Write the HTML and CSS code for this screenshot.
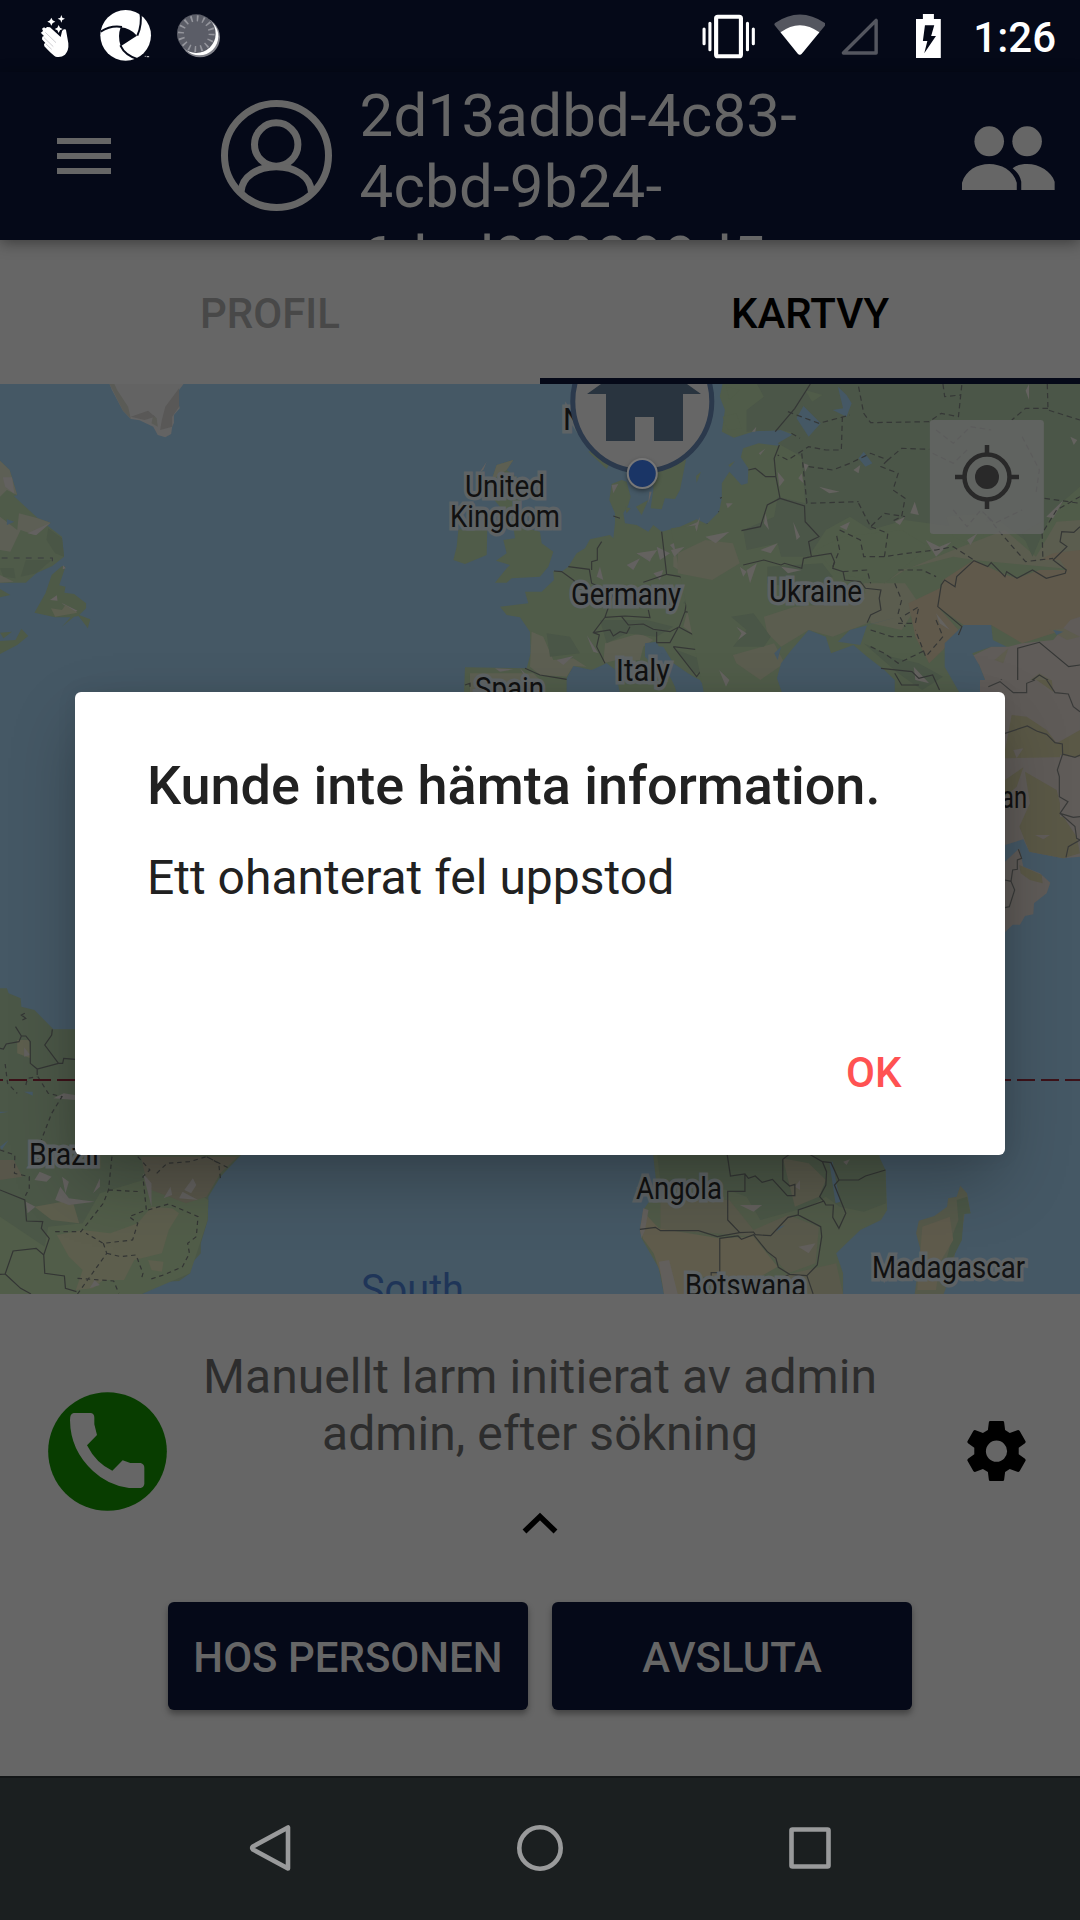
FILE: index.html
```html
<!DOCTYPE html>
<html lang="sv">
<head>
<meta charset="utf-8">
<title>Kartvy</title>
<link rel="stylesheet" href="styles.css">
</head>
<body>
<div class="screen">
  <div class="statusbar">
    <div class="status-left">
      <svg class="s-hand" viewBox="60 0 90 180"><path fill="#fff" d="M62 84l7-6-3-7 6-4 5 3 4-4 9 1 32 29 4-17q3-8 10-6l2 2 7 40q2 22-10 34-12 10-28 6-8-3-34-31l-1-7 4-3-10-11 1-8 5-2-9-9zM94 38l4 8 8 4-8 4-4 8-4-8-8-4 8-4zM124 30l3 8 8 3-8 4-3 8-3-8-8-4 8-3zM116 60l4 8 8 4-8 4-4 8-4-8-8-4 8-4z"/><path d="M76 82l32 31M72 98l28 27M77 116l18 17" stroke="#9a9ba2" stroke-width="1.5" fill="none"/></svg>
      <svg class="s-logo" viewBox="240 0 155 180"><circle cx="317" cy="91" r="76" fill="#fff"/><path fill="#050918" d="M302 67Q330 69 351 92Q332 104 302 124Q292 94 302 67z"/><path d="M242 80Q273 60 306 66M352 92Q367 60 361 20M301 121Q315 152 357 164" stroke="#050918" stroke-width="6" fill="none"/><path d="M374 154h5m3 3v-4l2 3 2-3v4" stroke="#ddd" stroke-width="2" fill="none"/></svg>
      <svg class="s-spin" viewBox="470 0 130 180"><circle cx="539" cy="97" r="60" fill="#81828a"/><circle cx="537" cy="94" r="57" fill="#fff"/><circle cx="528" cy="86" r="58" fill="#5b5d67"/><circle cx="528" cy="86" r="46" fill="none" stroke="#94959c" stroke-width="18" stroke-dasharray="5 13.06"/></svg>
    </div>
    <div class="status-right">
      <svg class="s-vib" viewBox="470 0 155 216" preserveAspectRatio="none"><rect x="511" y="50" width="72" height="119" rx="5" fill="none" stroke="#fff" stroke-width="12"/><path d="M493 70v79M602 70v79M476 87v44M619 87v44" stroke="#fff" stroke-width="9" stroke-linecap="round"/></svg>
      <svg class="s-wifi" viewBox="678 0 150 216" preserveAspectRatio="none"><path fill="#54565f" d="M681 69Q753 18 826 69Q830 73 826 77L758 162Q753 167 748 162L681 77Q677 73 681 69z"/><path fill="#fff" d="M697 97Q753 54 810 97L758 162Q753 167 748 162z"/></svg>
      <svg class="s-sig" viewBox="873 0 110 216" preserveAspectRatio="none"><path d="M975 61V159H880z" fill="none" stroke="#54565f" stroke-width="10" stroke-linejoin="round"/></svg>
      <svg class="s-bat" viewBox="1092 0 72 216" preserveAspectRatio="none"><path fill="#fff" d="M1112 42h32v15h20v117h-72V57h20z"/><path fill="#050918" d="M1118 76h27l-9 32h14l-34 52 9-37h-13z"/></svg>
      <span class="clock">1:26</span>
    </div>
  </div>

  <header class="appbar">
    <div class="menu"><i></i><i></i><i></i></div>
    <svg class="avatar" viewBox="0 0 111 111" fill="none" stroke="#666" stroke-width="7"><circle cx="55.5" cy="55.5" r="52"/><circle cx="55.2" cy="44.5" r="21.7"/><path d="M20 92C21 76 37 66.8 55.3 66.8S89.500 76 90.500 92"/></svg>
    <div class="title">2d13adbd-4c83-4cbd-9b24-6dad999999d5</div>
    <svg class="people" viewBox="1225 378 270 192" preserveAspectRatio="none" fill="#666"><ellipse cx="1304" cy="424" rx="43" ry="45"/><ellipse cx="1414" cy="424" rx="43" ry="45"/><path d="M1225 570V548C1236 510 1270 492 1304 492S1374 510 1384 548V570zM1372 505C1385 494 1400 492 1414 492C1450 492 1485 515 1494 545V570H1397V545C1393 525 1385 517 1372 505z"/></svg>
  </header>

  <nav class="tabs"><div class="tab">PROFIL</div><div class="tab active">KARTVY</div></nav>

  <svg class="map" viewBox="0 384 1080 910">
    <rect y="384" width="1080" height="910" fill="#455865"/>

    <!-- North Atlantic: Greenland, Labrador, Newfoundland -->
    <g transform="translate(0 240) scale(.3444 .3333)">
      <path fill="#636363" d="M318 432L325 450 357 512 380 537 405 541 445 560 458 585 480 592 497 582 500 560 505 548 505 525 522 505 518 490 520 450 533 432z"/>
      <path fill="#5a5b56" d="M318 432L357 512 380 537 372 500 340 450 332 432zM445 525L440 550 458 560 455 535z"/>
      <path fill="#595857" d="M480 500L520 445 520 500 500 530 500 560 465 570 470 540zM380 530L430 512 450 530 420 540z"/>
      <path fill="#4f5b49" d="M0 662L28 690 50 765 40 768 110 835 147 848 138 857 180 890 186 950 152 978 105 1000 75 1028 0 1028z"/>
      <path fill="#5d5f55" d="M0 662L28 690 50 765 20 750 0 770zM0 830L50 870 55 820 110 835 147 848 100 885 60 870 30 935 0 930zM0 1005L40 1025 0 1028z"/>
      <path fill="#636160" d="M8 712L35 712 42 762 15 740zM80 880L147 848 105 886z"/>
      <path fill="#4a5646" d="M140 865L180 895 186 950 160 940 135 900zM75 960L150 960 105 1000 60 1010zM0 985L40 985 45 1015 10 1010z"/>
      <path fill="#455865" d="M20 838L42 845 20 855z"/>
      <path d="M5 954H152V978" stroke="#3b3d40" stroke-width="3" stroke-dasharray="17 18" fill="none"/>
      <path fill="#4e5a47" d="M180 978L190 980 172 1036 190 1040 187 1058 215 1062 250 1090 250 1105 230 1125 262 1138 255 1165 228 1128 215 1130 180 1160 205 1132 160 1132 100 1118 132 1060 150 1005zM0 1203L45 1200 62 1166 82 1188 50 1215 0 1242zM0 1047L30 1065 0 1072zM0 1178L35 1175 10 1195z"/>
      <path fill="#666261" d="M145 1080L165 1066 167 1082zM178 1088L225 1112 215 1118zM183 976L191 985 182 988z"/>
      <path fill="#5d5f50" d="M148 1105L180 1110 190 1095 225 1118 160 1130z"/>
    </g>

    <!-- Western Europe -->
    <g transform="translate(440 380) scale(.3333)">
      <g fill="#505c49">
        <path d="M515 312L545 300 560 305 572 350 565 375 550 400 555 430 590 435 625 455 640 435 665 455 720 440 770 418 800 432 885 432 900 940 840 940 810 925 700 850 670 800 615 795 620 820 700 900 710 940 540 940 527 880 500 850 455 870 400 858 380 895 380 940H72L75 862 260 865 272 820 270 755 240 712 200 705 180 680 265 670 255 635 305 635 342 600 340 573 365 575 385 560 410 520 435 505 450 478 510 465 520 475 525 430 525 400 508 360z"/>
        <path d="M155 350L175 300 160 285 170 255 220 240 200 270 240 300 245 440 300 455 305 490 340 515 325 560 300 590 215 595 200 608 165 608 200 565 210 555 168 542 200 520 190 480 225 475 220 440 180 380zM55 450L50 500 40 540 75 552 140 525 142 445 100 430zM445 215L500 267 515 240 480 200zM700 200L738 240 720 330 705 357 675 355 665 388 632 385 640 330 640 260zM588 380L625 360 605 405zM555 380L572 385 560 400zM768 288L783 275 770 308zM865 255L885 243 870 262z"/>
      </g>
      <path fill="#5d5f52" d="M170 255L220 240 200 270 155 300zM700 530L780 480 850 490 870 540 930 560 870 590 820 610 750 590 700 560zM740 700L850 680 880 700 820 765 770 770 730 740zM275 755L310 770 340 840 400 835 440 860 400 858 380 890 300 885 270 860zM495 790L600 760 640 780 610 800 600 840 530 840 490 850zM90 880L280 880 300 900 280 936 90 936zM770 790L820 770 850 830 870 900 800 880zM890 860L1020 850 1000 900 900 910z"/>
      <path fill="#4a5647" d="M320 760L390 770 420 820 330 830zM480 720L620 720 700 740 650 770 560 760 500 790zM750 640L880 660 870 690 790 690 730 670zM860 750L930 710 985 720 985 780 950 810 890 790 870 800zM710 810L790 840 790 880 760 880z"/>
      <path fill="#636160" d="M120 275L140 245 130 270zM515 315L535 312 520 340zM590 520L640 515 630 545zM635 335L625 370 628 335zM740 440L775 425 775 450 750 460zM560 555L600 535 580 570zM650 500L690 520 660 540zM690 495L730 475 710 520zM890 730L915 760 890 785 900 760zM440 765L475 820 460 815zM480 560L490 600 470 590zM350 840L400 828 370 855zM240 865L260 885 255 890zM540 640L600 620 580 650zM640 580L670 570 660 600zM165 865L220 868 180 875z"/>
      <path fill="#455865" d="M615 790L650 785 665 820 700 850 740 880 780 900 800 940 715 940 690 890 640 855 615 830zM383 940L383 898 400 862 460 872 500 850 527 870 535 940zM820 605L862 570 855 590z"/>
      <g fill="none" stroke="#353736" stroke-width="3.500">
        <path d="M342 573L365 575 400 600 410 610M385 560L448 568 455 610M485 485L472 505 472 540 455 545 455 570M665 455L680 583 610 607M680 583L720 590 780 640 740 665 735 695 718 740 690 755 640 748 610 732 565 735 545 710M455 610L520 640 495 712 460 758 478 765 470 800 495 850M495 712L555 708 630 713 625 690M460 758L510 750 520 768 540 755 560 760 570 740M780 635L825 650 880 645 890 625 915 590 895 530 910 500 905 450 885 432 885 410 835 395M800 432H885M735 695L780 700 820 680 870 680 885 700 845 740 825 768 780 775 718 742M870 680L880 650M700 800L780 810 800 850 770 890 700 800M650 755L650 788 690 788 715 742M780 775L790 810 800 850 830 890M825 768L850 810 880 820 885 850 870 880 885 930M885 850L1000 855 1030 850M255 865L300 885 380 898M840 355L870 343 935 343 982 375 960 440 905 450M840 355M520 408L540 415M75 915L90 910 90 920M885 700L950 705 985 685 1020 685 1050 720 1062 750 1040 760 1022 790 1060 800M1022 790L1020 740 985 685M800 900L820 885 830 936M840 905L880 905 920 915 1015 912"/>
      </g>
    </g>

    <!-- Eastern Europe and Central Asia -->
    <g transform="translate(540 370) scale(.3444 .3333)">
      <path fill="#505c49" d="M1568 42L530 42 522 80 537 120 528 185 563 203 625 183 700 180 735 195 690 227 635 220 590 235 583 262 605 295 603 340 585 345 550 305 528 340 528 385 520 425 485 462 380 475 480 990H1568z"/>
      <path fill="#4b5648" d="M630 42L1568 42 1568 350 1490 420 1420 520 1330 450 1200 470 1060 450 960 480 900 440 830 480 780 560 700 560 690 520 600 540 590 480 680 440 690 380 770 400 760 260 690 220 740 190 700 180 600 185 600 120 650 80z"/>
      <path fill="#505c49" d="M530 140L570 130 585 175 545 180zM770 60L820 75 790 95zM540 50L580 60 550 90zM880 500L1050 480 1130 530 1000 640 860 610 800 540zM1180 440L1300 430 1280 540 1200 500z"/>
      <path fill="#5b5d4f" d="M1568 450L1500 455 1440 560 1350 480 1200 540 1060 600 1000 640 990 720 950 760 850 800 780 780 700 830 660 790 650 740 740 710 870 700 990 650 1050 600 1200 560 1260 570 1568 600zM940 640L1060 640 1100 700 1050 780 960 760zM400 550L480 510 560 520 580 580 500 630 400 610zM560 855L680 820 710 880 640 930 570 880z"/>
      <path fill="#60594b" d="M1170 630L1260 570 1345 612 1385 625 1450 600 1530 600 1510 570 1450 570 1490 550 1568 540V770L1490 790 1400 820 1310 765 1230 765 1155 710zM1070 700L1170 650 1155 710 1215 780 1170 840 1130 880 1090 800z"/>
      <path fill="#605c59" d="M1568 740L1540 750 1490 810 1400 820 1360 830 1310 830 1250 860 1275 885 1300 950 1360 990H1568z"/>
      <path fill="#5d5c4e" d="M1320 870L1360 835 1345 880zM1410 940L1450 910 1500 940 1480 990 1400 990zM1480 780L1520 775 1568 800 1530 810z"/>
      <path fill="#4a5647" d="M660 590L820 580 850 620 780 660 660 640zM555 740L620 730 670 800 650 830 560 830 600 780zM940 820L1020 860 1100 880 1170 920 1110 960 1040 910zM1400 490L1480 440 1430 560z"/>
      <path fill="#455865" d="M688 925L700 880 730 840 780 780 830 800 845 850 910 825 950 860 1000 900 1030 930 1030 990 710 990zM865 815L900 780 1035 742 950 765 930 825zM1175 820L1230 765 1310 765 1315 810 1355 830 1310 830 1255 850 1275 885 1300 950 1340 930 1350 990 1230 990 1175 890zM745 145L765 108 815 160 780 200zM865 50L890 75 905 100 890 140 850 120 880 115zM940 245L965 280 945 290 925 265zM680 850L700 830 690 870zM1490 780L1520 785 1500 795z"/>
      <path fill="#64625f" d="M1410 62L1420 42 1420 90zM765 280L780 285 770 305zM690 305L710 330 695 350zM750 325L760 310 765 340zM910 300L930 285 925 310zM1075 430L1088 395 1100 435zM1030 455L1060 440 1045 465zM540 400L560 400 545 415zM735 455L755 500 745 510zM650 460L655 430 665 480zM640 540L690 520 670 550zM1120 510L1160 530 1195 515 1150 560zM1240 510L1270 490 1250 525zM1540 200L1560 210 1550 225zM570 770L600 790 575 810 585 790zM280 550L340 540 320 570zM380 540L420 530 390 560zM450 470L465 440 455 485zM615 185L628 170 625 185zM635 250L655 235 640 255zM600 600L630 580 610 640zM480 500L550 485 510 520zM870 470L900 455 890 480zM700 590L760 600 720 610zM810 350L870 365 840 370zM580 590L600 605 590 620zM520 900L550 930 540 950zM1085 890L1130 940 1090 930zM1150 730L1190 780 1160 760zM1470 440L1520 390 1490 445z"/>
      <g fill="none" stroke="#353736" stroke-width="3.500">
        <path d="M785 42L740 115 683 185M695 225L680 265 685 320 697 385 660 405 640 470 585 482M605 300L625 295 655 320H685M697 385L768 408 770 455 810 500 780 515 788 560 845 550 855 575 850 595 880 605 885 630 930 635 945 655 990 660 985 685 990 720 960 735 950 758M590 585L650 570 700 585 710 580 760 595 765 565 788 560M1215 795L1225 770 1155 710 1165 645 1175 630 1205 650 1210 620 1260 572 1300 590 1310 578 1350 620 1355 605 1385 625 1430 600 1470 625 1525 610 1528 600 1490 570 1530 530 1510 515 1515 485 1550 487 1568 470M1387 966V835L1450 817 1535 890 1568 885M1305 948L1340 930 1375 968H1410V945L1450 915 1490 940 1495 965 1530 975M990 895L1080 905 1100 925 1140 915 1160 960M1030 910L1050 945 1100 945"/>
        <path stroke-dasharray="16 11" d="M925 50L940 130 960 158 1130 155 1165 130 1215 140 1225 42M1170 42L1175 80 1220 75M1473 42L1475 120 1568 150M1475 115H1410L1370 150M720 125L810 160 900 135M878 140L875 240 830 240 780 230 720 270 690 255M730 190L755 205M760 250L775 400 925 395M780 290L850 300 900 280 960 250 1010 270 1050 235 1130 238M1010 270L990 290 1040 310 1025 360 1060 385 1050 440 1020 455M1150 180L1200 220 1250 170 1310 180M1140 250L1200 280 1240 240M1400 200L1450 300 1440 370M925 400L960 470 1000 430 1060 440M870 480L930 510 940 560 1000 560 1065 550 1150 540 1200 530 1260 570M850 590L870 540 860 490M1000 560L1010 490 960 470M1200 420L1240 470 1280 420 1320 460 1400 420M1300 440L1330 480 1410 575 1490 565M1460 560L1458 490 1500 420 1568 380M1465 385L1568 400M880 605L950 600 960 640M1030 640L1050 690 1040 730 1060 770M1040 600L1110 600 1150 620M1060 735L1100 710 1090 760 1040 760M1150 750L1170 800 1120 860 1090 780M960 830L1000 850 1040 880 1120 840M960 780L1020 800 1080 800"/>
      </g>
      <rect x="1132" y="150" width="331" height="342" rx="10" fill="#666" fill-opacity=".78"/>
    </g>

    <!-- Iran, Pakistan and Oman coast -->
    <g transform="translate(980 680) scale(.3333)">
      <path fill="#5f5b58" d="M0 0H300V530L250 535 148 515 130 478 75 495H0z"/>
      <path fill="#5a5846" d="M95 105L140 110 200 150 230 190 300 150V230L70 235 85 160zM135 275L230 330 250 410 290 470 300 520 250 535 148 515 118 440 150 370zM75 300L130 262 110 320 75 350zM170 0H215L220 35z"/>
      <path fill="#605c59" d="M240 225L300 235V410H240zM165 465L210 465 190 478zM100 210L130 205 110 235z"/>
      <path fill="#5f5b58" d="M75 545L118 505 130 560 180 580 211 608 200 640 162 670 160 703 135 708 120 734H98L75 757z"/>
      <path fill="#5a5846" d="M118 555L185 585 188 610 150 600 122 580z"/>
      <g fill="none" stroke="#393a39" stroke-width="3.500"><path d="M0 0M25 20L60 5 100 38H140V10L165 0M200 0L225 38 265 42 280 80 300 95M75 160L142 138 170 153 200 163 225 188 247 192 248 222 285 232 300 225M248 222L232 270 238 290V350L264 365 240 400 285 440 290 475 300 480 265 500 258 532M240 400L280 412 300 410M75 600L93 604 104 630 88 680 75 683M93 604L98 570 112 568 112 540 125 535 115 508"/></g>
    </g>

    <!-- Brazil -->
    <g transform="translate(0 960) scale(.3444 .3333)">
      <path fill="#4b5747" d="M0 85L20 85 25 100 60 115 62 140 100 150 155 208 230 208 700 585 640 650 605 710 603 780 583 850 583 880 552 915 552 940 520 963 480 965 412 1002H0z"/>
      <path fill="#515d49" d="M0 770L130 860 140 800 240 790 290 700 480 640 605 720 603 780 552 940 412 1002H0z"/>
      <path fill="#5d5e4d" d="M165 825L240 810 320 820 400 790 440 740 500 745 520 760 490 810 470 880 390 900 360 960 300 960 270 985 220 990 240 930 200 890zM100 740L210 720 230 790 150 780zM50 240L85 240 88 295 50 280zM430 900L475 905 470 935 440 930z"/>
      <path fill="#58564a" d="M410 590L690 590 640 640 600 710 540 730 440 690 420 640zM0 600L40 600 65 650 0 660z"/>
      <path fill="#62605e" d="M100 660L115 635 150 650 135 665zM180 650L200 665 190 700zM270 700L290 655 290 680zM160 720L175 680 200 715 275 725 200 735zM415 640L440 670 440 740zM475 715L495 680 500 705zM520 715L530 695 575 720zM535 690L560 655 570 675 555 700zM70 262L88 285 70 290zM75 725L103 740 80 760zM155 415L185 400 218 405 218 420zM260 985L275 960 290 975z"/>
      <path fill="#455865" d="M70 395L95 395 95 407zM0 455H25L0 460zM0 560L25 540 5 570z"/>
      <g fill="none" stroke="#333534" stroke-width="3.500"><path d="M0 265L10 267 18 252 55 245 62 228H75L88 245V310L108 327 170 310 130 255 150 225 152 208M45 200L62 228M108 327V345M168 310H182L185 295 218 298M72 160L62 165 75 175 65 180M0 690L72 720 77 783 124 785 120 805 143 835 127 885 105 865 38 873 15 942 0 943M15 942L60 985 90 1002M127 885L130 940 187 948 190 985 222 995"/><path stroke-dasharray="13 11" d="M15 312L22 370 50 400M110 350L140 400 180 410 150 460 120 540M75 375L80 355 108 350M0 570L43 585 42 640 85 650 85 685 70 715M325 590L315 690 300 730 235 815 150 815M400 590L435 630 415 650 425 750 375 770 400 790 385 840 300 850 250 820M315 690L410 695M455 640L485 610 550 605 600 590 665 625M600 590L635 610 640 655M430 750L490 732 575 770 570 830 545 850 550 880 530 920 480 943 430 960M300 850L310 880 225 1002M310 880L350 890 395 885 415 940 410 960M225 955L330 963 345 1000"/></g>
    </g>

    <!-- Southern Africa and Madagascar -->
    <g transform="translate(540 1130) scale(.3444 .3333)">
      <path fill="#505a48" d="M328 70H985L988 105 1003 120 1008 240 990 270 930 300 860 370 880 430 880 492H360L345 415 295 325 290 300 300 240 340 180z"/>
      <path fill="#4a5646" d="M340 70H980L1003 120 1005 220 940 245 870 230 830 200 780 230 640 270 600 200 545 180 350 160z"/>
      <path fill="#59594b" d="M350 200L550 210 620 300 720 255 810 290 800 400 720 430 620 320 510 310 350 300zM705 85L780 100 830 150 810 200 740 230zM690 440L860 400 880 492H690z"/>
      <path fill="#605c4c" d="M300 245L345 295 520 325 620 320 690 410 640 440 420 440 430 492H370L330 370 298 325z"/>
      <path fill="#625f5c" d="M345 395L375 390 400 492H360zM300 235L315 240 305 300 295 325 290 300zM580 225L645 225 620 245zM750 350L800 340 780 370zM880 95L900 88 890 105zM740 170L755 150 755 180z"/>
      <path fill="#455865" d="M840 95L850 95 860 155 872 215 858 220zM685 305L695 290 712 285z"/>
      <path fill="#55594a" d="M1220 167L1240 190 1250 250 1233 250 1225 310 1205 370 1195 430 1172 492H1088L1105 360 1092 310 1100 272 1145 258 1182 230 1185 205 1210 200z"/>
      <path fill="#4a5646" d="M1210 210L1240 200 1250 250 1230 252 1225 330 1200 380 1180 390 1200 310 1215 270z"/>
      <path fill="#5f5b4c" d="M1110 290L1190 260 1200 330 1160 400 1150 480 1095 480z"/>
      <g fill="none" stroke="#333534" stroke-width="3.500"><path d="M543 70L553 138 595 132 605 145 625 138 645 157 675 148 718 197H740V163L725 168 705 150V88L725 72M595 132V184H545V270L580 308 515 320 460 302 350 302 335 292 290 298M580 308L620 306 625 314 670 317 720 262 750 255 815 290 818 320 805 405 775 437 725 433 692 412 685 385 660 365 620 314 585 328 575 318 522 325V428H497L497 440M785 74L820 95 832 125 830 165 812 200 825 215 830 225 852 225 850 262 868 295 888 250 855 165 868 150H925L945 138 1003 120M820 95L845 98 868 150M750 255V240L825 213M700 445L725 433M775 437L793 492"/></g>
    </g>

    <path d="M-15 1080H1080" stroke="#3c1219" stroke-width="2" stroke-dasharray="18 6"/>

    <g class="labels">
      <text x="563" y="430">N</text>
      <text x="465" y="497" textLength="80" lengthAdjust="spacingAndGlyphs">United</text>
      <text x="450" y="527" textLength="110" lengthAdjust="spacingAndGlyphs">Kingdom</text>
      <text x="571" y="605" textLength="110" lengthAdjust="spacingAndGlyphs">Germany</text>
      <text x="769" y="602" textLength="93" lengthAdjust="spacingAndGlyphs">Ukraine</text>
      <text x="616" y="681" textLength="54" lengthAdjust="spacingAndGlyphs">Italy</text>
      <text x="475" y="699" textLength="69" lengthAdjust="spacingAndGlyphs">Spain</text>
      <text class="plain" x="1001" y="808" textLength="26" lengthAdjust="spacingAndGlyphs">an</text>
      <text x="29" y="1165" textLength="70" lengthAdjust="spacingAndGlyphs">Brazil</text>
      <text x="636" y="1199" textLength="86" lengthAdjust="spacingAndGlyphs">Angola</text>
      <text x="685" y="1296" textLength="121" lengthAdjust="spacingAndGlyphs">Botswana</text>
      <text x="872" y="1278" textLength="153" lengthAdjust="spacingAndGlyphs">Madagascar</text>
    </g>
    <text class="ocean" x="361" y="1304" textLength="103" lengthAdjust="spacingAndGlyphs">South</text>

    <g class="locate" fill="none" stroke="#292929"><circle cx="987" cy="477" r="22.500" stroke-width="4.500"/><circle cx="987" cy="477" r="12" fill="#292929" stroke="none"/><path d="M987 445v10M987 499v10M955 477h10M1009 477h10" stroke-width="4.500"/></g>
    <circle cx="642.300" cy="401.500" r="69.500" fill="#666" stroke="#2b394c" stroke-width="5"/>
    <path fill="#29343f" d="M601 384H687L701 394H683V441H654V417H635V441H606V394H587z"/>
    <circle class="dot" cx="642.300" cy="473.500" r="14.500" fill="#1a3566" stroke="#777" stroke-width="2"/>
  </svg>

  <section class="panel">
    <div class="alarm">
      <svg class="call" viewBox="55 65 357 357"><circle cx="233.500" cy="243.500" r="178" fill="#083d00"/><path fill="#666" d="M132 128H184Q194 130 194 142V162L202 194 172 225Q200 280 248 301L279 270 302 278H333Q344 281 344 292V341Q342 352 333 353H298Q235 345 190 302Q122 240 121 150Q120 131 132 128z"/></svg>
      <div class="alarm-text"><p>Manuellt larm initierat av admin<br>admin, efter sökning</p>
        <svg class="chev" viewBox="0 0 36 22"><path d="M2.500 19.500L18 4.500l15.500 15" fill="none" stroke="#000" stroke-width="5.500"/></svg></div>
      <svg class="gear" viewBox="560 62 176 181"><path fill-rule="evenodd" d="M628 62H668Q671 63 671 66L674 89 688 98 713 89Q716 89 718 92L736 124Q736 127 734 129L715 143V162L734 176Q736 178 736 181L718 213Q716 216 713 216L688 207 674 216 671 239Q671 242 668 243H628Q625 242 625 239L622 216 607 207 583 216Q580 216 578 213L560 181Q560 178 562 176L581 162V143L562 129Q560 127 560 124L578 92Q580 89 583 89L607 98 622 89 625 66Q625 63 628 62zM648 121A32 32 0 1 0 648 185A32 32 0 1 0 648 121z"/></svg>
    </div>
    <div class="actions"><div class="btn">HOS PERSONEN</div><div class="btn">AVSLUTA</div></div>
  </section>

  <footer class="navbar">
    <svg viewBox="0 0 48 48"><path d="M42 3.500V44.500L7 25.500Q5.500 24 7 22.500z"/></svg>
    <svg viewBox="0 0 48 48"><circle cx="24" cy="24" r="20.700"/></svg>
    <svg viewBox="0 0 48 48"><rect x="5.500" y="5.500" width="37" height="37" rx="1"/></svg>
  </footer>

  <div class="dialog">
    <h1>Kunde inte hämta information.</h1>
    <p>Ett ohanterat fel uppstod</p>
    <div class="ok">OK</div>
  </div>
</div>
</body>
</html>
```
FILE: styles.css
```css
* { box-sizing: border-box; margin: 0; padding: 0; }
body { font-family: Roboto, "Noto Sans", sans-serif; background: #666; }
svg { display: block; flex: none; }
.screen { position: relative; width: 1080px; height: 1920px; overflow: hidden; display: flex; flex-direction: column; }

.statusbar { height: 72px; flex: none; background: #050918; display: flex; justify-content: space-between; }
.status-left { display: flex; padding: 5px 0 0 40px; }
.status-left svg { height: 60px; }
.s-hand { width: 30px; margin-right: 30px; }
.s-logo { width: 51.67px; margin-right: 25px; }
.s-spin { width: 43.33px; }
.status-right { display: flex; padding-right: 24px; }
.status-right svg { height: 72px; }
.s-vib { width: 53.4px; margin-right: 18.200px; }
.s-wifi { width: 51.6px; margin-right: 15.500px; }
.s-sig { width: 37.900px; margin-right: 37.500px; }
.s-bat { width: 24.800px; margin-right: 32px; }
.clock { color: #fff; font-size: 42px; font-weight: 500; line-height: 75px; width: 83px; text-align: right; white-space: nowrap; }

.appbar { position: relative; z-index: 2; height: 168px; flex: none; background: #050918; display: flex; align-items: flex-start; box-shadow: 0 3px 14px rgba(0,0,0,.4); }
.menu { width: 54px; margin: 66px 109.500px 0 57px; display: flex; flex-direction: column; gap: 9px; }
.menu i { height: 6px; background: #666; }
.avatar { width: 111px; height: 111px; margin-top: 28px; }
.title { width: 470px; height: 168px; margin-left: 28px; padding-top: 8px; font-size: 60px; line-height: 71px; letter-spacing: .2px; color: #666; overflow: hidden; }
.people { width: 93px; height: 64px; margin: 54px 25px 0 auto; }

.tabs { height: 144px; flex: none; display: flex; background: #666; }
.tab { flex: 1; text-align: center; font-size: 42px; font-weight: 500; line-height: 148px; color: #484848; }
.tab.active { color: #000; box-shadow: inset 0 -6px #050918; }

.map { width: 1080px; height: 910px; }
.labels text { font-size: 30.5px; fill: #111; stroke: #5e6365; stroke-width: 7px; paint-order: stroke; }
.labels .plain { stroke: none; }
.ocean { font-size: 42px; fill: #1f3558; }
.dot { filter: drop-shadow(0 2px 2px rgba(0,0,0,.4)); }

.panel { height: 482px; flex: none; background: #666; padding-top: 54px; }
.alarm { display: flex; align-items: flex-start; padding: 0 54px 0 48px; }
.call { width: 119px; height: 119px; margin-top: 44px; }
.alarm-text { width: 700px; margin: 0 76.500px 0 23px; text-align: center; font-size: 48px; line-height: 57px; letter-spacing: .08px; color: #2d2d2d; }
.chev { width: 36px; height: 22px; margin: 50px auto 0; }
.gear { width: 59px; height: 60px; margin-top: 73px; }
.actions { display: flex; justify-content: center; gap: 24px; margin-top: 68px; }
.btn { width: 360px; height: 108px; border-radius: 6px; background: #050918; color: #666; font-size: 42px; font-weight: 500; line-height: 112px; text-align: center; box-shadow: 0 4px 6px rgba(0,0,0,.35); }

.navbar { height: 144px; flex: none; background: #1b1f20; border-top: 2px solid #131617; display: flex; justify-content: center; align-items: center; gap: 222px; padding-bottom: 2px; }
.navbar svg { width: 48px; height: 48px; fill: none; stroke: #999a9b; stroke-width: 4.6; stroke-linejoin: round; }

.dialog { position: absolute; z-index: 5; left: 75px; top: 692px; width: 930px; height: 463px; padding: 62px 72px 0; border-radius: 6px; background: #fff; color: #212121; box-shadow: 0 28px 64px -6px rgba(0,0,0,.28), 0 0 20px rgba(0,0,0,.08); }
.dialog h1 { font-size: 54px; font-weight: 500; line-height: 64px; white-space: nowrap; }
.dialog p { margin-top: 32px; font-size: 48px; line-height: 56px; }
.ok { margin: 142px 31px 0 auto; width: 56px; font-size: 42px; font-weight: 500; line-height: 50px; color: #ff5252; }
```
